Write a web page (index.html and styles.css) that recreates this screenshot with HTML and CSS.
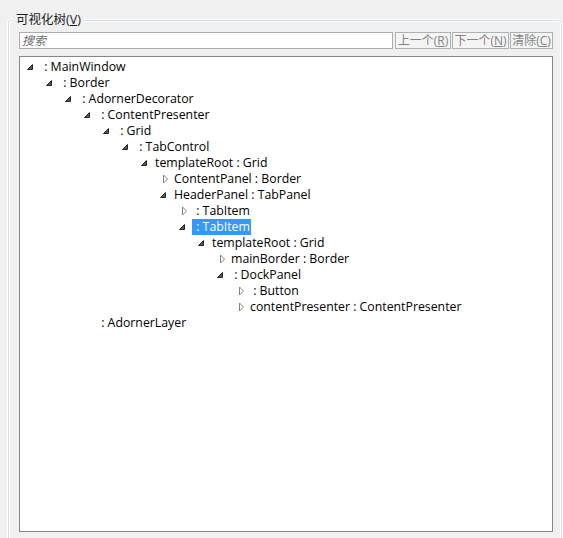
FILE: index.html
```
<!DOCTYPE html>
<html lang="zh-CN">
<head>
<meta charset="utf-8">
<title>可视化树</title>
<link rel="stylesheet" href="styles.css">
</head>
<body>
<div class="group">
  <div class="legend">可视化树(<span class="key">V</span>)</div>
  <div class="group-line">
    <div class="group-body">
      <div class="search-row">
        <input class="search" type="text" placeholder="搜索">
        <button class="btn btn-prev" disabled>上一个(<span class="key">R</span>)</button>
        <button class="btn btn-next" disabled>下一个(<span class="key">N</span>)</button>
        <button class="btn btn-clear" disabled>清除(<span class="key">C</span>)</button>
      </div>
      <div class="tree">
        <ul class="root">
          <li><div class="row"><span class="tg"><svg viewBox="0 0 16 16"><polygon class="exp" points="10.5,5.5 10.5,10.5 5.5,10.5"/></svg></span><span class="hd"> : MainWindow</span></div>
            <ul>
              <li><div class="row"><span class="tg"><svg viewBox="0 0 16 16"><polygon class="exp" points="10.5,5.5 10.5,10.5 5.5,10.5"/></svg></span><span class="hd"> : Border</span></div>
                <ul>
                  <li><div class="row"><span class="tg"><svg viewBox="0 0 16 16"><polygon class="exp" points="10.5,5.5 10.5,10.5 5.5,10.5"/></svg></span><span class="hd"> : AdornerDecorator</span></div>
                    <ul>
                      <li><div class="row"><span class="tg"><svg viewBox="0 0 16 16"><polygon class="exp" points="10.5,5.5 10.5,10.5 5.5,10.5"/></svg></span><span class="hd"> : ContentPresenter</span></div>
                        <ul>
                          <li><div class="row"><span class="tg"><svg viewBox="0 0 16 16"><polygon class="exp" points="10.5,5.5 10.5,10.5 5.5,10.5"/></svg></span><span class="hd"> : Grid</span></div>
                            <ul>
                              <li><div class="row"><span class="tg"><svg viewBox="0 0 16 16"><polygon class="exp" points="10.5,5.5 10.5,10.5 5.5,10.5"/></svg></span><span class="hd"> : TabControl</span></div>
                                <ul>
                                  <li><div class="row"><span class="tg"><svg viewBox="0 0 16 16"><polygon class="exp" points="10.5,5.5 10.5,10.5 5.5,10.5"/></svg></span><span class="hd">templateRoot : Grid</span></div>
                                    <ul>
                                      <li><div class="row"><span class="tg"><svg viewBox="0 0 16 16"><polygon class="col" points="8.5,4 12.5,8 8.5,12"/></svg></span><span class="hd">ContentPanel : Border</span></div></li>
                                      <li><div class="row"><span class="tg"><svg viewBox="0 0 16 16"><polygon class="exp" points="10.5,5.5 10.5,10.5 5.5,10.5"/></svg></span><span class="hd">HeaderPanel : TabPanel</span></div>
                                        <ul>
                                          <li><div class="row"><span class="tg"><svg viewBox="0 0 16 16"><polygon class="col" points="8.5,4 12.5,8 8.5,12"/></svg></span><span class="hd"> : TabItem</span></div></li>
                                          <li><div class="row"><span class="tg"><svg viewBox="0 0 16 16"><polygon class="exp" points="10.5,5.5 10.5,10.5 5.5,10.5"/></svg></span><span class="hd selected"> : TabItem</span></div>
                                            <ul>
                                              <li><div class="row"><span class="tg"><svg viewBox="0 0 16 16"><polygon class="exp" points="10.5,5.5 10.5,10.5 5.5,10.5"/></svg></span><span class="hd">templateRoot : Grid</span></div>
                                                <ul>
                                                  <li><div class="row"><span class="tg"><svg viewBox="0 0 16 16"><polygon class="col" points="8.5,4 12.5,8 8.5,12"/></svg></span><span class="hd">mainBorder : Border</span></div></li>
                                                  <li><div class="row"><span class="tg"><svg viewBox="0 0 16 16"><polygon class="exp" points="10.5,5.5 10.5,10.5 5.5,10.5"/></svg></span><span class="hd"> : DockPanel</span></div>
                                                    <ul>
                                                      <li><div class="row"><span class="tg"><svg viewBox="0 0 16 16"><polygon class="col" points="8.5,4 12.5,8 8.5,12"/></svg></span><span class="hd"> : Button</span></div></li>
                                                      <li><div class="row"><span class="tg"><svg viewBox="0 0 16 16"><polygon class="col" points="8.5,4 12.5,8 8.5,12"/></svg></span><span class="hd">contentPresenter : ContentPresenter</span></div></li>
                                                    </ul>
                                                  </li>
                                                </ul>
                                              </li>
                                            </ul>
                                          </li>
                                        </ul>
                                      </li>
                                    </ul>
                                  </li>
                                </ul>
                              </li>
                            </ul>
                          </li>
                        </ul>
                      </li>
                      <li><div class="row"><span class="tg"></span><span class="hd"> : AdornerLayer</span></div></li>
                    </ul>
                  </li>
                </ul>
              </li>
            </ul>
          </li>
        </ul>
      </div>
    </div>
  </div>
</div>
</body>
</html>
```
FILE: styles.css
```
html, body {
  margin: 0;
  padding: 0;
  background: #f0f0f0;
  overflow: hidden;
}
body {
  font-family: "Open Sans", "Noto Sans CJK SC", sans-serif;
  font-size: 12px;
  line-height: 16px;
  color: #000;
  width: 563px;
  height: 538px;
}
.group {
  position: relative;
  margin: 19px 0 0 7px;
  height: 540px;
  border: 1px solid #fff;
  border-radius: 4px;
  box-sizing: border-box;
}
.group-line {
  height: 100%;
  border: 1px solid #d5dfe5;
  border-radius: 3px;
  box-sizing: border-box;
}
.group-body {
  height: 100%;
  border: 1px solid #fff;
  border-radius: 2px;
  box-sizing: border-box;
  padding: 10px 0 0 9px;
}
.legend {
  position: absolute;
  left: 5px;
  top: -8px;
  padding: 0 3px;
  background: #f0f0f0;
  color: #1a1a1a;
  font-size: 12.5px;
  line-height: 16px;
}
.key {
  text-decoration: underline;
}
.search-row {
  display: flex;
  width: 534px;
  height: 17px;
}
.search {
  width: 374px;
  height: 17px;
  margin: 0;
  box-sizing: border-box;
  border: 1px solid #abadb3;
  background: #fff;
  padding: 0 2px;
  font: italic 12px/15px "Open Sans", "Noto Sans CJK SC", sans-serif;
  color: #000;
  outline: none;
}
.search::placeholder {
  color: #6d6d6d;
  font-style: italic;
}
.btn {
  appearance: none;
  margin: 0 0 0 1px;
  padding: 0;
  height: 17px;
  box-sizing: border-box;
  border: 1px solid #adb2b5;
  background: #f4f4f4;
  color: #838383;
  font: 12px/15px "Open Sans", "Noto Sans CJK SC", sans-serif;
  text-align: center;
  white-space: nowrap;
  overflow: hidden;
}
.btn-prev { margin-left: 2px; width: 56px; }
.btn-next { width: 57px; }
.btn-clear { width: 43px; }
.tree {
  margin-top: 7px;
  width: 534px;
  height: 476px;
  box-sizing: border-box;
  border: 1px solid #828790;
  background: #fff;
  padding: 2px 0 0 1px;
  overflow: hidden;
}
.tree ul {
  list-style: none;
  margin: 0;
  padding: 0 0 0 19px;
}
.tree ul.root {
  padding-left: 0;
}
.row {
  display: flex;
  height: 16px;
  align-items: flex-start;
}
.tg {
  flex: none;
  width: 19px;
  height: 16px;
}
.tg svg {
  display: block;
  width: 16px;
  height: 16px;
  margin-left: 1px;
}
.exp {
  fill: #595959;
  stroke: #262626;
  stroke-width: 1;
}
.col {
  fill: #fff;
  stroke: #818181;
  stroke-width: 1;
}
.hd {
  white-space: pre;
  padding: 0 1px;
  height: 16px;
  font-size: 12.3px;
  line-height: 16px;
}
.selected {
  background: #3399ff;
  color: #fff;
}
```
